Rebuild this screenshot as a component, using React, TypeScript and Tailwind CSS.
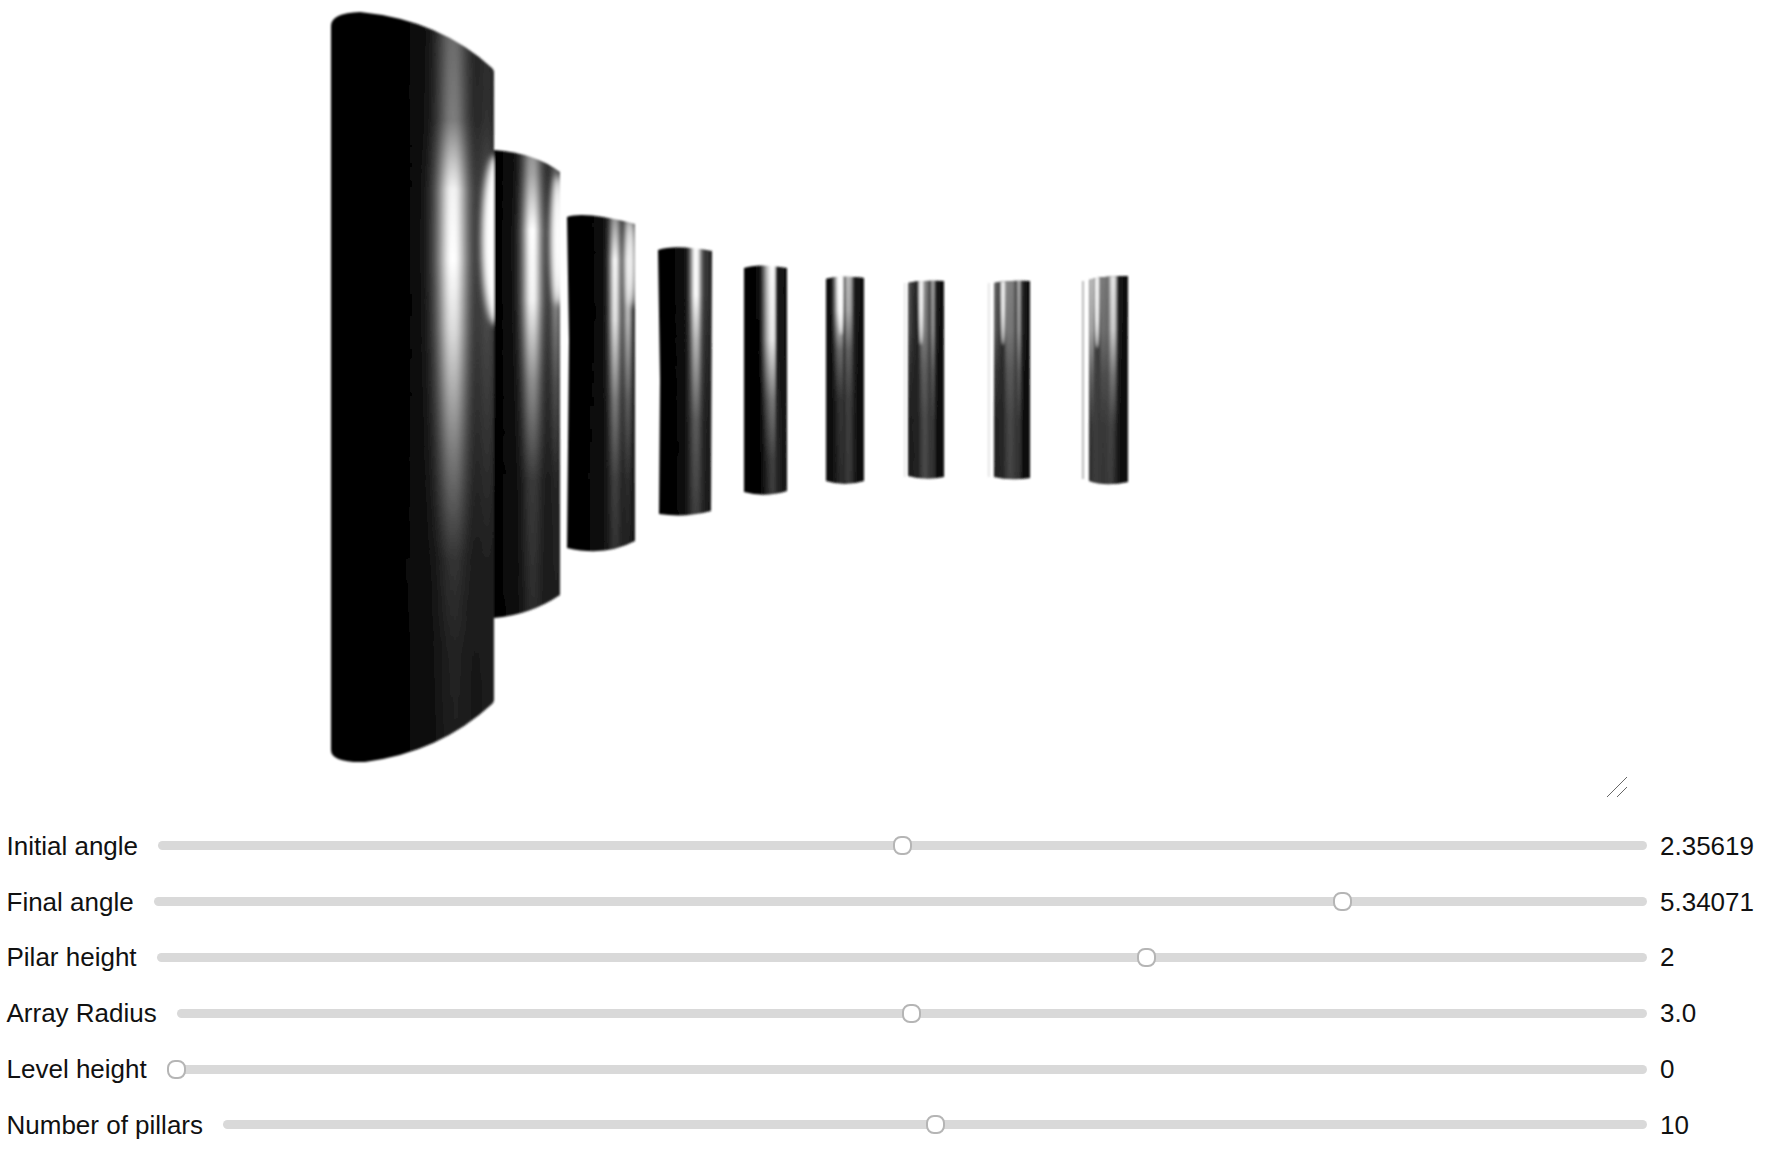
import React from 'react';

type Stop = [number, number];

type Pillar = {
  path: string;
  base: Stop[];
  shine: Stop[];
  fade: Stop[];
  glow?: { cx: number; cy: number; rx: number; ry: number };
  wedge?: { cx: number; cy: number; rx: number; ry: number };
  sliver?: { x: number; w: number; y: number; h: number; fill: string };
};

// smooth light bands: [centre, sigma, strength], sampled into gradient stops
function bands(x0: number, x1: number, peaks: [number, number, number][]): Stop[] {
  const stops: Stop[] = [];
  for (let x = x0; x <= x1; x += 2) {
    const v = peaks.reduce((sum, [c, s, a]) => sum + a * Math.exp(-((x - c) * (x - c)) / (2 * s * s)), 0);
    stops.push([x, Math.min(255, Math.round(v))]);
  }
  return stops;
}

// drawn back to front, the nearest pillar last
const pillars: Pillar[] = [
  {
    path: 'M1089 280 Q1100 276 1128 276 L1128 482 Q1105 487 1089 481 Z',
    base: [[1089, 28], [1096, 62], [1103, 48], [1110, 58], [1115, 32], [1122, 12], [1128, 8]],
    shine: [[1089, 150], [1092, 205], [1095, 70], [1099, 60], [1102, 125], [1108, 110], [1112, 235], [1115, 225], [1118, 30], [1128, 6]],
    fade: [[276, 1], [330, 0.85], [375, 0.4], [425, 0.1], [484, 0.05]],
    wedge: { cx: 1097, cy: 282, rx: 2.5, ry: 66 },
    sliver: { x: 1082, w: 2, y: 281, h: 198, fill: '#bbbbbb' },
  },
  {
    path: 'M994 283 Q1005 280 1030 281 L1030 478 Q1010 481 994 477 Z',
    base: [[994, 26], [1003, 40], [1010, 68], [1016, 52], [1020, 40], [1024, 12], [1030, 6]],
    shine: [[994, 120], [998, 75], [1003, 40], [1007, 130], [1013, 125], [1016, 70], [1019, 190], [1022, 40], [1030, 6]],
    fade: [[281, 1], [330, 0.85], [370, 0.4], [420, 0.1], [479, 0.05]],
    wedge: { cx: 1003, cy: 285, rx: 2.2, ry: 60 },
    sliver: { x: 988, w: 1.5, y: 283, h: 194, fill: '#dddddd' },
  },
  {
    path: 'M908 283 Q918 280 944 281 L944 477 Q925 481 908 476 Z',
    base: [[908, 24], [918, 36], [925, 72], [930, 52], [934, 42], [938, 12], [944, 6]],
    shine: [[908, 100], [912, 55], [918, 30], [922, 140], [926, 130], [930, 70], [933, 180], [936, 30], [944, 6]],
    fade: [[281, 1], [330, 0.85], [370, 0.4], [420, 0.1], [479, 0.05]],
    wedge: { cx: 921, cy: 285, rx: 2.2, ry: 60 },
    sliver: { x: 904, w: 1.5, y: 283, h: 194, fill: '#e2e2e2' },
  },
  {
    path: 'M826 279 Q840 275 864 278 L864 481 Q845 487 826 481 Z',
    base: [[826, 10], [836, 18], [842, 34], [848, 52], [852, 42], [858, 14], [864, 8]],
    shine: [[826, 8], [832, 22], [838, 250], [842, 250], [844, 60], [847, 190], [851, 170], [854, 30], [864, 10]],
    fade: [[276, 1], [310, 0.9], [350, 0.35], [400, 0.1], [484, 0.05]],
    wedge: { cx: 841, cy: 285, rx: 2.2, ry: 50 },
  },
  {
    path: 'M744 268 Q758 263 787 268 L787 491 Q765 498 744 492 Z',
    base: [[744, 2], [762, 6], [772, 50], [778, 38], [787, 14]],
    shine: [[744, 2], [760, 8], [767, 190], [771, 255], [775, 240], [776, 40], [780, 20], [787, 16]],
    fade: [[265, 1], [340, 0.9], [400, 0.35], [460, 0.08], [495, 0.05]],
  },
  {
    path: 'M658 250 Q675 244 712 251 L711 511 Q685 518 659 514 L660 380 Z',
    base: bands(658, 712, [[695, 6, 36], [712, 22, 22]]),
    shine: bands(658, 712, [[696, 4, 255], [708, 3, 45], [690, 12, 15]]),
    fade: [[246, 1], [295, 1], [340, 0.65], [420, 0.2], [515, 0.05]],
  },
  {
    path: 'M567 217 Q585 211 635 224 L635 541 Q605 557 567 548 L569 340 Z',
    base: bands(567, 635, [[615, 6, 22], [635, 30, 22]]),
    shine: bands(567, 635, [[615, 4, 225], [628, 3, 180], [620, 15, 30]]),
    fade: [[216, 0.5], [260, 1], [320, 0.9], [400, 0.4], [480, 0.12], [550, 0.05]],
    glow: { cx: 631, cy: 262, rx: 4.5, ry: 45 },
  },
  {
    path: 'M494 150 Q535 153 560 172 L560 595 Q530 615 494 618 Z',
    base: bands(494, 560, [[532, 8, 14], [560, 35, 24]]),
    shine: bands(494, 560, [[532, 7, 225], [556, 4, 110], [540, 20, 40]]),
    fade: [[150, 0.5], [175, 0.6], [230, 1], [300, 0.95], [380, 0.5], [480, 0.12], [618, 0.05]],
    glow: { cx: 558, cy: 240, rx: 7, ry: 65 },
  },
  {
    path: 'M331 26 Q331 13 360 12 Q440 20 492 68 Q494 70 494 72 L494 700 Q494 702 492 704 Q440 752 365 762 Q331 763 331 750 Z',
    base: bands(331, 494, [[494, 55, 24]]),
    shine: bands(331, 494, [[453, 11, 215], [450, 20, 45], [488, 8, 70]]),
    fade: [[12, 0.35], [120, 0.45], [190, 0.95], [260, 1], [330, 0.85], [450, 0.45], [560, 0.14], [650, 0.07], [762, 0.05]],
    glow: { cx: 496, cy: 240, rx: 14, ry: 85 },
  },
];

const sliders = [
  { label: 'Initial angle', value: '2.35619', pos: 0.5 },
  { label: 'Final angle', value: '5.34071', pos: 0.8 },
  { label: 'Pilar height', value: '2', pos: 0.666 },
  { label: 'Array Radius', value: '3.0', pos: 0.5 },
  { label: 'Level height', value: '0', pos: 0 },
  { label: 'Number of pillars', value: '10', pos: 0.5 },
];

const grey = (v: number) => `rgb(${v},${v},${v})`;

function Bands({ id, stops }: { id: string; stops: Stop[] }) {
  return (
    <linearGradient id={id} gradientUnits="userSpaceOnUse" x1="0" x2="1788" y1="0" y2="0">
      {stops.map(([x, v]) => (
        <stop key={x} offset={x / 1788} stopColor={grey(v)} />
      ))}
    </linearGradient>
  );
}

function PillarScene() {
  return (
    <svg className="block w-full h-full" viewBox="0 0 1788 818">
      <defs>
        <filter id="soft" x="0" y="0" width="1788" height="818" filterUnits="userSpaceOnUse">
          <feGaussianBlur stdDeviation="0.9" />
        </filter>
        <filter id="glow" x="0" y="0" width="1788" height="818" filterUnits="userSpaceOnUse">
          <feGaussianBlur stdDeviation="3" />
        </filter>
        <filter id="wedge" x="0" y="0" width="1788" height="818" filterUnits="userSpaceOnUse">
          <feGaussianBlur stdDeviation="1.2" />
        </filter>
        {pillars.map((p, i) => (
          <React.Fragment key={i}>
            <Bands id={`base${i}`} stops={p.base} />
            <Bands id={`shine${i}`} stops={p.shine} />
            <linearGradient id={`fade${i}`} gradientUnits="userSpaceOnUse" x1="0" x2="0" y1="0" y2="818">
              {p.fade.map(([y, o]) => (
                <stop key={y} offset={y / 818} stopColor="#fff" stopOpacity={o} />
              ))}
            </linearGradient>
            <mask id={`mask${i}`} maskUnits="userSpaceOnUse" x="0" y="0" width="1788" height="818">
              <rect width="1788" height="818" fill={`url(#fade${i})`} />
            </mask>
            <clipPath id={`clip${i}`}>
              <path d={p.path} />
            </clipPath>
          </React.Fragment>
        ))}
      </defs>
      <g filter="url(#soft)">
        {pillars.map((p, i) => (
          <g key={i}>
            {p.sliver && <rect x={p.sliver.x} y={p.sliver.y} width={p.sliver.w} height={p.sliver.h} fill={p.sliver.fill} />}
            <g clipPath={`url(#clip${i})`}>
              <rect width="1788" height="818" fill={`url(#base${i})`} />
              <rect width="1788" height="818" fill={`url(#shine${i})`} mask={`url(#mask${i})`} />
              {p.glow && <ellipse {...p.glow} fill="#fff" filter="url(#glow)" />}
              {p.wedge && <ellipse {...p.wedge} fill="#fff" filter="url(#wedge)" />}
            </g>
          </g>
        ))}
      </g>
    </svg>
  );
}

function Slider({ pos }: { pos: number }) {
  return (
    <div className="relative flex-1 h-[9px] rounded-full bg-[#d9d9d9]">
      <div
        className="absolute top-[-5px] w-[19px] h-[19px] rounded-[8px] border-2 border-[#b5b5b5] bg-white"
        style={{ left: `calc((100% - 19px) * ${pos})` }}
      />
    </div>
  );
}

export default function App() {
  return (
    <div className="w-[1788px] h-[1158px] bg-white overflow-hidden font-['Liberation_Sans',Arial,sans-serif] text-[26px] text-[#111]">
      <div className="relative h-[818px]">
        <PillarScene />
        {/* resize handle */}
        <svg className="absolute left-[1606px] top-[776px] w-[22px] h-[22px]" viewBox="0 0 22 22">
          <path d="M1 21 L21 1 M11 21 L21 11" stroke="#666" strokeWidth="1" fill="none" />
        </svg>
      </div>
      <div className="flex flex-col pl-[6.5px]">
        {sliders.map((s) => (
          <div key={s.label} className="flex items-center h-[55.8px]">
            <span className="mr-[20px] pt-[1px] whitespace-nowrap">{s.label}</span>
            <Slider pos={s.pos} />
            <span className="w-[128px] ml-[13px] pt-[1px]">{s.value}</span>
          </div>
        ))}
      </div>
    </div>
  );
}
